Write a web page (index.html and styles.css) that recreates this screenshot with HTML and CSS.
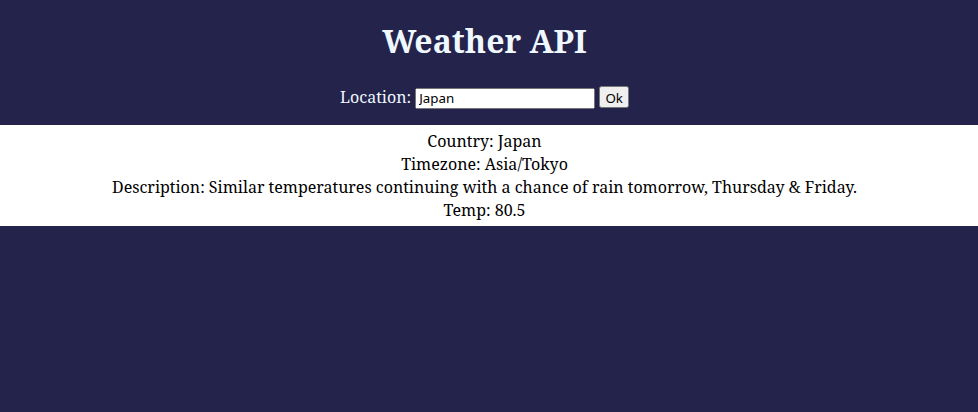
FILE: index.html
```html
<!DOCTYPE html>
<html>
<head>
<meta charset="utf-8">
<title>Weather API</title>
<link rel="stylesheet" href="styles.css">
</head>
<body>
<header class="header">
  <h1 class="title">Weather API</h1>
  <form class="search">
    <label class="label" for="loc">Location:</label>
    <input class="input" id="loc" type="text" value="Japan">
    <button class="btn" type="button">Ok</button>
  </form>
</header>
<section class="result">
  <div>Country: Japan</div>
  <div>Timezone: Asia/Tokyo</div>
  <div>Description: Similar temperatures continuing with a chance of rain tomorrow, Thursday &amp; Friday.</div>
  <div>Temp: 80.5</div>
</section>
</body>
</html>
```
FILE: styles.css
```css
html, body {
  margin: 0;
  background: #24234b;
  font-family: "Noto Serif", "DejaVu Serif", serif;
}
.header {
  text-align: center;
  color: #f0f8ff;
  padding: 0 9px 16px 0;
}
.title {
  margin: 0;
  padding-top: 19px;
  padding-bottom: 24px;
  font-size: 32px;
}
.search {
  font-size: 16px;
}
.input, .btn {
  font-family: "Noto Sans", sans-serif;
  font-size: 13.33px;
}
.input {
  width: 180px;
  height: 21px;
  box-sizing: border-box;
  padding: 1px 2px;
}
.btn {
  padding: 1px 4px;
  height: 22px;
}
.result {
  background: #fff;
  color: #000;
  text-align: center;
  font-size: 16px;
  line-height: 23px;
  padding: 5px 9px 4px 0;
}
```
